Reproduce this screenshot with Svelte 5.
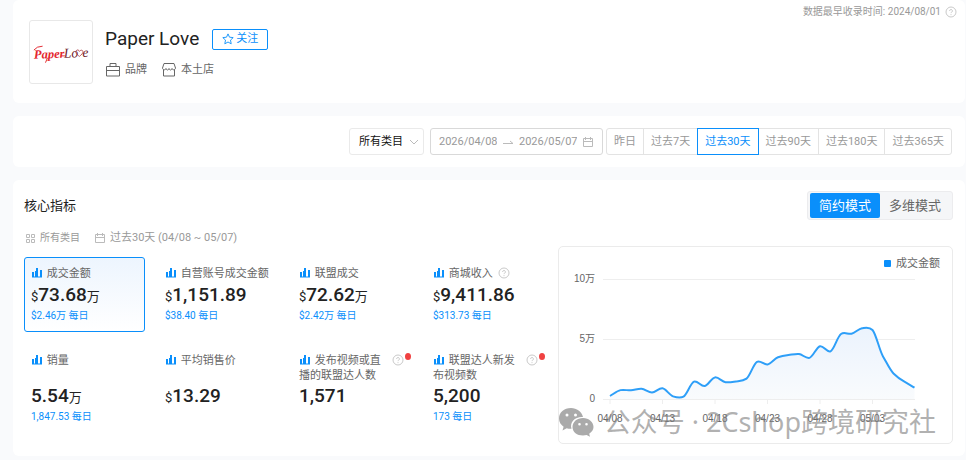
<script lang="ts">
	type Metric = {
		label: string;
		value: string;
		prefix?: string;
		unit?: string;
		daily?: string;
		help?: boolean;
		dot?: boolean;
	};

	const ranges = ['昨日', '过去7天', '过去30天', '过去90天', '过去180天', '过去365天'];
	const modes = ['简约模式', '多维模式'];

	const metrics: Metric[] = [
		{ label: '成交金额', prefix: '$', value: '73.68', unit: '万', daily: '$2.46万 每日' },
		{ label: '自营账号成交金额', prefix: '$', value: '1,151.89', daily: '$38.40 每日' },
		{ label: '联盟成交', prefix: '$', value: '72.62', unit: '万', daily: '$2.42万 每日' },
		{ label: '商城收入', prefix: '$', value: '9,411.86', daily: '$313.73 每日', help: true },
		{ label: '销量', value: '5.54', unit: '万', daily: '1,847.53 每日' },
		{ label: '平均销售价', prefix: '$', value: '13.29' },
		{ label: '发布视频或直播的联盟达人数', value: '1,571', help: true, dot: true },
		{ label: '联盟达人新发布视频数', value: '5,200', daily: '173 每日', help: true, dot: true }
	];

	let range = $state('过去30天');
	let mode = $state('简约模式');
	let selected = $state('成交金额');
	let category = $state('所有类目');
	let startDate = $state('2026/04/08');
	let endDate = $state('2026/05/07');

	// daily sales in 万
	const sales = [
		0.25, 0.74, 0.72, 0.85, 0.54, 0.89, 0.22, 0.2, 1.45, 1.08, 1.8, 1.4, 1.46, 1.7, 3.1, 2.88, 3.48,
		3.66, 3.75, 3.43, 4.4, 3.97, 5.42, 5.44, 5.9, 5.75, 3.55, 2.13, 1.46, 0.94
	];
	const step = 10.5;
	const baseline = 152;
	const points = sales.map((v, i) => [51 + i * step, baseline - v * 12]);
	const ticks = ['04/08', '04/13', '04/18', '04/23', '04/28', '05/03'];

	function smooth(pts: number[][]) {
		const slopes = pts.map((p, i) => {
			if (i === 0) return pts[1][1] - p[1];
			if (i === pts.length - 1) return p[1] - pts[i - 1][1];
			const before = p[1] - pts[i - 1][1];
			const after = pts[i + 1][1] - p[1];
			return (before + after) / 2.5;
		});
		let d = `M${pts[0][0]} ${pts[0][1]}`;
		for (let i = 1; i < pts.length; i++) {
			const [x0, y0] = pts[i - 1];
			const [x1, y1] = pts[i];
			d += `C${x0 + step / 3} ${y0 + slopes[i - 1] / 3} ${x1 - step / 3} ${y1 - slopes[i] / 3} ${x1} ${y1}`;
		}
		return d;
	}

	const line = smooth(points);
	const area = `${line}V${baseline}H51Z`;
</script>

{#snippet helpIcon()}
	<svg class="help" viewBox="0 0 12 12" width="12" height="12" aria-hidden="true">
		<circle cx="6" cy="6" r="5" />
		<path d="M4.6 4.9a1.4 1.4 0 1 1 2.1 1.2c-.5.3-.7.5-.7 1M6 8.2v.9" />
	</svg>
{/snippet}

{#snippet calendarIcon()}
	<svg class="outline" viewBox="0 0 12 12" width="12" height="12" aria-hidden="true">
		<path d="M1.500 2.500h9v8h-9zM1.500 5.500h9M3.500 1v3M8.500 1v3" />
	</svg>
{/snippet}

<main>
	<section class="card shop">
		<svg class="logo" viewBox="0 0 64 64" width="64" height="64" role="img" aria-label="Paper Love">
			<g transform="rotate(-2 32 34)">
				<text class="logo-text bold" x="4" y="38" fill="#e3262e">Paper</text>
				<text class="logo-text" x="35" y="38" fill="#6d2028">Lo</text>
				<text class="logo-text" x="54" y="38" fill="#6d2028">e</text>
			</g>
			<path
				d="M51 36.500c-3.500-2.500-4.500-4.500-3.300-5.900s2.900-.6 3.300.8c1-1.700 3.200-1.600 3.600-.2.400 1.900-1.500 3.700-3.600 5.300z"
				fill="none"
				stroke="#a8323a"
				stroke-width=".8"
			/>
			<path d="M4 30q3-4 9-4M18 38l-2 5M32 36l4 0" fill="none" stroke="#e3262e" />
		</svg>
		<div class="shop-info">
			<div class="shop-name">
				<h1>Paper Love</h1>
				<button class="follow">
					<svg viewBox="0 0 12 12" width="12" height="12" aria-hidden="true">
						<path
							d="M6 .9l1.500 3.300 3.700.4-2.700 2.500.7 3.700L6 9l-3.200 1.800.7-3.700L.8 4.600l3.700-.4z"
						/>
					</svg>
					关注
				</button>
			</div>
			<div class="tags">
				<span>
					<svg class="tag-icon" viewBox="0 0 16 16" width="16" height="16" aria-hidden="true">
						<path d="M1.500 4.500h13v9.500h-13zM5 4.500V1.500h6v3M1.500 8.500h13" />
					</svg>
					品牌
				</span>
				<span>
					<svg class="tag-icon" viewBox="0 0 16 16" width="16" height="16" aria-hidden="true">
						<path
							d="M2.500 7.500V14h11V7.500M3 1.500h10l1.500 4.500c0 2-3 2.500-3.500.5-.5 2-2.500 2-3 0-.5 2-2.500 2-3 0-.5 2-3.500 1.500-3.500-.5z"
						/>
					</svg>
					本土店
				</span>
			</div>
		</div>
		<p class="recorded">数据最早收录时间: 2024/08/01 {@render helpIcon()}</p>
	</section>

	<section class="card filters">
		<div class="select">
			<select bind:value={category} aria-label="类目">
				<option>所有类目</option>
			</select>
			<svg viewBox="0 0 10 10" width="10" height="10" aria-hidden="true">
				<path d="M1 3l4 4 4-4" />
			</svg>
		</div>
		<div class="dates">
			<input bind:value={startDate} aria-label="开始日期" />
			<svg class="outline" viewBox="0 0 12 12" width="12" height="12" aria-hidden="true">
				<path d="M1 7.500h10L8 5" />
			</svg>
			<input bind:value={endDate} aria-label="结束日期" />
			{@render calendarIcon()}
		</div>
		<div class="ranges">
			{#each ranges as item}
				<button class:active={range === item} onclick={() => (range = item)}>{item}</button>
			{/each}
		</div>
	</section>

	<section class="card core">
		<header>
			<h2>核心指标</h2>
			<div class="modes">
				{#each modes as item}
					<button class:active={mode === item} onclick={() => (mode = item)}>{item}</button>
				{/each}
			</div>
		</header>
		<div class="core-body">
			<div>
				<div class="scope">
					<span>
						<svg class="outline" viewBox="0 0 12 12" width="12" height="12" aria-hidden="true">
							<path d="M2.500 2.500h3v3h-3zM7.500 2.500h3v3h-3zM2.500 7.500h3v3h-3zM7.500 7.500h3v3h-3z" />
						</svg>
						<small>所有类目</small>
					</span>
					<span>{@render calendarIcon()} 过去30天 (04/08 ~ 05/07)</span>
				</div>
				<div class="metrics">
					{#each metrics as m, i}
						<button
							class="metric"
							class:active={selected === m.label}
							class:tall={i > 3}
							onclick={() => (selected = m.label)}
						>
							<span class="label">
								<span class="label-text">
									<svg class="bars" viewBox="0 0 12 12" width="12" height="12" aria-hidden="true">
										<path d="M1 5h2v5H1zM4 4h1v6H4zM5 1h2v9H5zM9 3h2v7H9zM1 9.500h10v1H1z" />
									</svg>
									{m.label}
								</span>
								{#if m.help}{@render helpIcon()}{/if}
								{#if m.dot}<i class="dot"></i>{/if}
							</span>
							<span class="value">
								{#if m.prefix}<small>{m.prefix}</small>{/if}<b>{m.value}</b>{#if m.unit}<small>{m.unit}</small>{/if}
							</span>
							{#if m.daily}<span class="daily">{m.daily}</span>{/if}
						</button>
					{/each}
				</div>
			</div>
			<div class="chart">
				<svg viewBox="0 0 393 196" role="img" aria-label="成交金额">
					<defs>
						<linearGradient id="fill" x1="0" y1="0" x2="0" y2="1">
							<stop offset="0" stop-color="#ebf3fd" />
							<stop offset="1" stop-color="#f9fbfd" />
						</linearGradient>
					</defs>
					<rect x="325" y="13" width="7" height="7" rx="1" fill="#0a8ffb" />
					<text class="legend" x="337" y="20">成交金额</text>
					<path class="grid" d="M44 32.500H356M44 92.500H356M44 152.500H356" />
					<text class="axis" x="36" y="35" text-anchor="end">10万</text>
					<text class="axis" x="36" y="95" text-anchor="end">5万</text>
					<text class="axis" x="36" y="155" text-anchor="end">0</text>
					<path d={area} fill="url(#fill)" />
					<path class="line" d={line} />
					{#each ticks as tick, i}
						<path class="tick" d="M{51 + i * step * 5} 152v5" />
						<text class="axis" x={51 + i * step * 5} y="175" text-anchor="middle">{tick}</text>
					{/each}
				</svg>
				<div class="watermark">
					<svg viewBox="0 0 36 30" width="36" height="30" aria-hidden="true">
						<path
							fill-rule="evenodd"
							d="M13 1C6 1 1 5.500 1 11.500c0 3.500 1.800 6.300 4.600 8.200L4.500 23.500l4.200-2.200c1.500.4 3 .6 4.800.5C11.500 15 17 9.500 25 10 23.700 4.500 18.700 1 13 1zM9 6.500a1.500 1.500 0 1 1 0 3 1.500 1.500 0 1 1 0-3zM17.500 6.500a1.500 1.500 0 1 1 0 3 1.500 1.500 0 1 1 0-3z"
						/>
						<path
							fill-rule="evenodd"
							d="M25 11c-6 0-10.500 3.900-10.500 9S19 28.500 25 28.500c1.300 0 2.500-.2 3.600-.5l3.400 1.700-.8-3c2.600-1.700 4.300-4 4.300-6.700 0-5-4.700-9-10.500-9zM21.500 16a1.300 1.300 0 1 1 0 2.600 1.300 1.300 0 1 1 0-2.600zM28.500 16a1.300 1.300 0 1 1 0 2.600 1.300 1.300 0 1 1 0-2.600z"
						/>
					</svg>
					公众号 · 2Cshop跨境研究社
				</div>
			</div>
		</div>
	</section>
</main>

<style>
	:global(body) {
		background: #f9fafc;
	}

	main {
		display: flex;
		flex-direction: column;
		gap: 13px;
		padding: 0 1px 4px 13px;
		font-family: Roboto, 'Noto Sans CJK SC', sans-serif;
		font-size: 11px;
		line-height: 16px;
		color: #666;
	}

	h1,
	h2,
	p {
		margin: 0;
		font-weight: 400;
	}

	button,
	input,
	select {
		box-sizing: border-box;
		margin: 0;
		font: inherit;
		color: inherit;
		background: #fff;
		border: none;
	}

	button {
		padding: 0;
		cursor: pointer;
	}

	svg {
		flex: none;
	}

	.outline,
	.help {
		fill: none;
		stroke: #bbb;
	}

	.help {
		stroke-width: 0.8;
	}

	.card {
		background: #fff;
		border-radius: 6px;
	}

	.shop {
		display: flex;
		align-items: flex-start;
		padding: 20px 8px 19px 16px;
	}

	.logo {
		box-sizing: border-box;
		border: 1px solid #e8e8e8;
		border-radius: 3px;
	}

	.logo-text {
		font: italic 14px 'Liberation Serif', serif;
	}

	.logo-text.bold {
		font-size: 13px;
		font-weight: 700;
	}

	.shop-info {
		flex: 1;
		padding: 7px 0 0 12px;
	}

	.shop-name {
		display: flex;
		align-items: center;
		gap: 13px;
	}

	h1 {
		font-size: 19px;
		line-height: 24px;
		color: #222;
	}

	.follow {
		display: flex;
		align-items: center;
		justify-content: center;
		gap: 2px;
		width: 56px;
		height: 21px;
		color: #0a8ffb;
		border: 1px solid #0a8ffb;
		border-radius: 2px;
	}

	.follow svg {
		fill: none;
		stroke: #0a8ffb;
		stroke-width: 0.9;
	}

	.tags {
		display: flex;
		gap: 14px;
		margin-top: 11px;
	}

	.tags span,
	.scope span {
		display: flex;
		align-items: center;
		gap: 4px;
	}

	.tag-icon {
		fill: none;
		stroke: #666;
	}

	.recorded {
		display: flex;
		align-items: center;
		gap: 4px;
		margin-top: -16px;
		font-size: 10px;
		color: #999;
	}

	.filters {
		display: flex;
		justify-content: flex-end;
		gap: 6px;
		padding: 12px 13px;
	}

	.select {
		position: relative;
	}

	.select select {
		width: 75px;
		height: 27px;
		padding: 0 9px;
		color: #111;
		appearance: none;
		border: 1px solid #eaeaea;
		border-radius: 3px;
	}

	.select svg {
		position: absolute;
		top: 9px;
		right: 5px;
		fill: none;
		stroke: #bbb;
		pointer-events: none;
	}

	.dates {
		box-sizing: border-box;
		display: flex;
		align-items: center;
		gap: 5px;
		width: 173px;
		height: 27px;
		padding: 0 8px;
		color: #999;
		border: 1px solid #d9d9d9;
		border-radius: 3px;
	}

	.dates input {
		flex: 1;
		min-width: 0;
		padding: 0;
	}

	.ranges {
		display: flex;
		margin-left: -3px;
	}

	.ranges button {
		height: 27px;
		padding: 0 7px;
		margin-right: -1px;
		color: #999;
		border: 1px solid #e3e3e3;
	}

	.ranges button:first-child {
		border-radius: 3px 0 0 3px;
	}

	.ranges button:last-child {
		margin-right: 0;
		border-radius: 0 3px 3px 0;
	}

	.ranges button.active {
		position: relative;
		color: #0a8ffb;
		border-color: #0a8ffb;
	}

	.core {
		padding: 11px 12px 12px 11px;
	}

	header {
		display: flex;
		align-items: center;
		justify-content: space-between;
	}

	h2 {
		font-size: 13px;
		color: #222;
	}

	.modes {
		display: flex;
		padding: 1px 2px;
		font-size: 13px;
		background: #f5f6f8;
		border: 1px solid #ececee;
		border-radius: 3px;
	}

	.modes button {
		width: 70px;
		height: 25px;
		background: none;
		border-radius: 2px;
	}

	.modes button.active {
		color: #fff;
		background: #0a8ffb;
	}

	.core-body {
		display: grid;
		grid-template-columns: 523fr 395fr;
		gap: 11px;
		align-items: start;
	}

	.scope {
		display: flex;
		gap: 14px;
		padding: 10px 0 11px;
		color: #999;
	}

	.scope small {
		font-size: 10px;
	}

	.metrics {
		display: grid;
		grid-template-columns: repeat(4, 1fr);
		gap: 12px 13px;
	}

	.metric {
		display: flex;
		flex-direction: column;
		align-items: flex-start;
		min-width: 0;
		padding: 8px 0 7px 6px;
		text-align: left;
		border: 1px solid transparent;
		border-radius: 3px;
	}

	.metric.active {
		background: linear-gradient(#edf5fe, #fff);
		border-color: #0a8ffb;
	}

	.label {
		display: flex;
		gap: 5px;
		height: 16px;
		line-height: 15px;
	}

	.tall .label {
		height: 30px;
	}

	.tall .label-text {
		width: 88px;
	}

	.label .help {
		margin-top: 1px;
	}

	.bars {
		margin-right: 1px;
		vertical-align: -2px;
		fill: #0a8ffb;
	}

	.dot {
		width: 6px;
		height: 7px;
		margin-left: -4px;
		background: #f04141;
		border-radius: 50%;
	}

	.value {
		height: 26px;
		line-height: 26px;
		color: #222;
	}

	.value b {
		font-size: 19px;
		font-weight: 500;
	}

	.value small {
		font-size: 13px;
		line-height: 13px;
	}

	.daily {
		font-size: 10px;
		color: #0a8ffb;
	}

	.chart {
		position: relative;
		margin-top: 26px;
		border: 1px solid #ebebeb;
		border-radius: 5px;
	}

	.chart > svg {
		display: block;
		width: 100%;
	}

	.legend {
		font-size: 11px;
		fill: #666;
	}

	.axis {
		font-family: 'Liberation Sans', 'Noto Sans CJK SC', sans-serif;
		font-size: 10px;
		fill: #666;
	}

	.grid,
	.tick {
		stroke: #eee;
	}

	.line {
		fill: none;
		stroke: #2e9ff8;
		stroke-width: 2;
	}

	.watermark {
		position: absolute;
		right: 16px;
		bottom: 5px;
		display: flex;
		align-items: center;
		gap: 10px;
		font-family: 'Noto Sans', 'Noto Sans CJK SC', sans-serif;
		font-size: 27px;
		line-height: 32px;
		color: rgba(125, 125, 125, 0.6);
		white-space: nowrap;
		pointer-events: none;
	}

	.watermark svg {
		fill: #aaa;
	}
</style>
